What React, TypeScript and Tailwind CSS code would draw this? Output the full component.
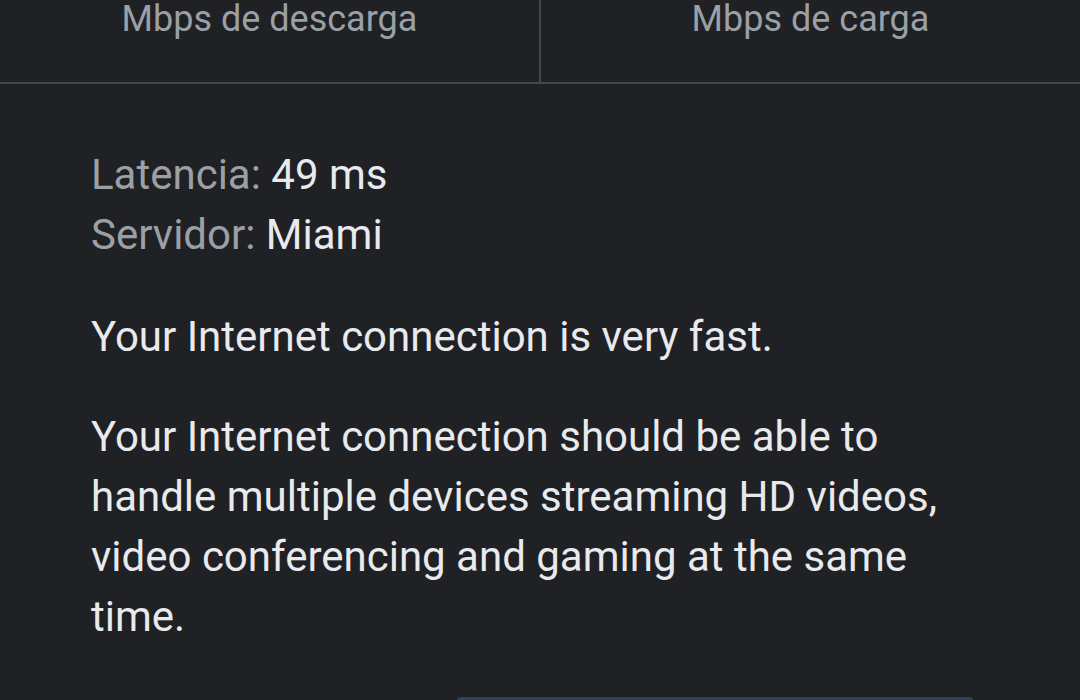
import React from "react";

export default function App() {
  return (
    <div
      className="w-[1080px] h-[700px] overflow-hidden bg-[#202124] flex flex-col"
      style={{ fontFamily: "Roboto, 'Noto Sans', sans-serif" }}
    >
      <div className="flex h-[84px] border-b-2 border-[#45474b] shrink-0">
        <div className="flex-1 border-r-2 border-[#45474b] flex justify-center">
          <span className="text-[36px] leading-[40px] text-[#9aa0a6] -mt-[1px]">Mbps de descarga</span>
        </div>
        <div className="flex-1 flex justify-center">
          <span className="text-[36px] leading-[40px] text-[#9aa0a6] -mt-[1px]">Mbps de carga</span>
        </div>
      </div>
      <div className="pl-[91px] pr-[90px] pt-[61px] text-[42px] leading-[60px] text-[#e8eaed]">
        <div>
          <span className="text-[#9aa0a6]">Latencia:</span> 49 ms
        </div>
        <div>
          <span className="text-[#9aa0a6]">Servidor:</span> Miami
        </div>
        <p className="mt-[42px]">Your Internet connection is very fast.</p>
        <p className="mt-[40px]">
          Your Internet connection should be able to handle multiple devices streaming HD videos, video conferencing and gaming at the same time.
        </p>
      </div>
      <div className="flex justify-end pr-[107px] mt-auto">
        <div className="w-[516px] h-[4px] rounded-t-[24px] bg-[#34405a] translate-y-[1px]"></div>
      </div>
    </div>
  );
}
